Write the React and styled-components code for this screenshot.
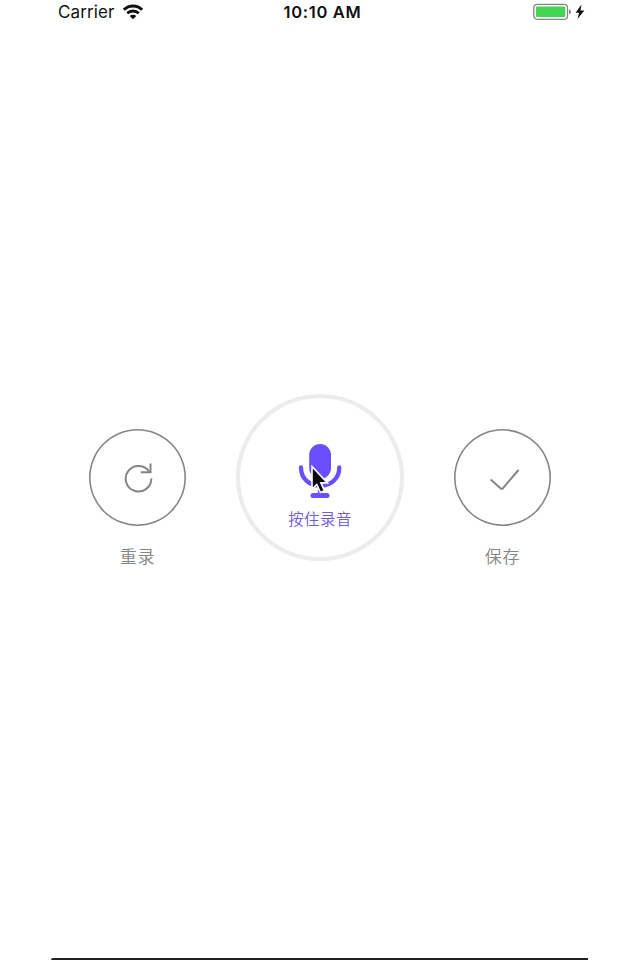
import React from "react";
import styled, { createGlobalStyle } from "styled-components";

const GlobalStyle = createGlobalStyle`
  * {
    box-sizing: border-box;
  }
  body {
    margin: 0;
    background: #fff;
    overflow: hidden;
  }
`;
const Screen = styled.div`
  width: 537px;
  height: 960px;
  margin-left: 51px;
  display: flex;
  flex-direction: column;
  background: #fff;
  font-family: Inter, "Noto Sans CJK SC", sans-serif;
`;
const StatusBar = styled.header`
  display: grid;
  grid-template-columns: 1fr auto 1fr;
  align-items: center;
  height: 24px;
  padding: 0 3px 0 7px;
  color: #111;
  font-size: 17px;
  line-height: 24px;
`;
const StatusGroup = styled.div`
  display: flex;
  align-items: center;
  justify-content: ${({ $end }) => ($end ? "flex-end" : "flex-start")};
  gap: ${({ $end }) => ($end ? "3px" : "8px")};
`;
const Carrier = styled.span`
  letter-spacing: 0.1px;
`;
const Clock = styled.span`
  padding-left: 2px;
  font-size: 16.5px;
  font-weight: 600;
  letter-spacing: 0.7px;
`;
const Recorder = styled.main`
  flex: 1;
  display: flex;
  align-items: flex-start;
  justify-content: space-between;
  padding: 370px 37px 0 38px;
`;
const SideAction = styled.div`
  display: flex;
  flex-direction: column;
  align-items: center;
  margin-top: 35px;
`;
const RoundButton = styled.button`
  display: flex;
  align-items: center;
  justify-content: center;
  width: 97px;
  height: 97px;
  padding: 0;
  border: 0;
  border-radius: 50%;
  background: transparent;
  box-shadow: inset 0 0 0 1.6px #858585;
`;
const SideLabel = styled.span`
  margin-top: 18px;
  color: #858585;
  font-size: 17px;
  font-weight: 350;
  letter-spacing: 0.8px;
  line-height: 26px;
`;
const RecordButton = styled.button`
  position: relative;
  display: flex;
  flex-direction: column;
  align-items: center;
  width: 168px;
  height: 167px;
  padding: 45px 0 0;
  border: 4px solid #ececec;
  border-radius: 50%;
  background: transparent;
  font-family: inherit;
`;
const RecordLabel = styled.span`
  margin-top: 9px;
  color: #6f5ce0;
  font-size: 15.5px;
  font-weight: 350;
  letter-spacing: 0.4px;
  line-height: 24px;
`;
const Pointer = styled.svg`
  position: absolute;
  left: 70px;
  top: 67px;
`;
const BottomEdge = styled.footer`
  height: 2px;
  background: #222;
  border-top-left-radius: 2px;
`;

function WifiIcon() {
  return (
    <svg width="22" height="16" viewBox="0 0 22 16" fill="none" stroke="#111" strokeWidth="2.8">
      <path d="M1.8 5.8C7 0.7 15 0.7 20.2 5.8" />
      <path d="M5.2 9.3C8.5 6.2 13.5 6.2 16.8 9.3" />
      <path d="M11 15.3L7.7 12C9.6 10.2 12.4 10.2 14.3 12Z" fill="#111" stroke="none" />
    </svg>
  );
}

function BatteryIcon() {
  return (
    <svg width="39" height="18" viewBox="0 0 39 18">
      <rect x="0.8" y="1.3" width="33.7" height="15" rx="3.2" fill="#fff" stroke="#858585" strokeWidth="1.3" />
      <rect x="3" y="3.5" width="29.3" height="10.6" rx="1" fill="#45d453" />
      <path d="M36 6.3C38.7 7.2 38.7 10.4 36 11.3Z" fill="#858585" />
    </svg>
  );
}

function BoltIcon() {
  return (
    <svg width="10" height="16" viewBox="0 0 10 16">
      <path d="M6.5 0.5L0.6 8.7H4.1L2.4 15L9.4 6.5H5.5Z" fill="#111" />
    </svg>
  );
}

function RetryIcon() {
  return (
    <svg width="32" height="32" viewBox="0 0 32 32" fill="none" stroke="#858585" strokeWidth="2">
      <path d="M29.3 16.6A12.8 12.8 0 1 1 27.4 10" />
      <path d="M28.5 1.6V10.2H18.8" />
    </svg>
  );
}

function CheckIcon() {
  return (
    <svg width="32" height="24" viewBox="0 0 32 24" fill="none" stroke="#858585" strokeWidth="2" strokeLinecap="round" strokeLinejoin="round">
      <path d="M4.2 14.1L13.5 22.2Q14.8 23.4 16 22.2L31 4.5" />
    </svg>
  );
}

function MicIcon() {
  return (
    <svg width="44" height="56" viewBox="0 0 44 56" fill="none" stroke="#6b4eff" strokeWidth="4.3" strokeLinecap="round">
      <rect x="11.2" y="1" width="21.8" height="35" rx="10.9" fill="#6b4eff" stroke="none" />
      <path d="M3 24.5C3 36 11.5 42.8 22 42.8S41.3 36 41.3 24.5" />
      <path d="M22 43V52" />
      <path d="M15 52.6H29" strokeWidth="5" />
    </svg>
  );
}

function App() {
  return (
    <>
      <GlobalStyle />
      <Screen>
        <StatusBar>
          <StatusGroup>
            <Carrier>Carrier</Carrier>
            <WifiIcon />
          </StatusGroup>
          <Clock>10:10 AM</Clock>
          <StatusGroup $end>
            <BatteryIcon />
            <BoltIcon />
          </StatusGroup>
        </StatusBar>
        <Recorder>
          <SideAction>
            <RoundButton>
              <RetryIcon />
            </RoundButton>
            <SideLabel>重录</SideLabel>
          </SideAction>
          <RecordButton>
            <MicIcon />
            <RecordLabel>按住录音</RecordLabel>
            <Pointer width="19" height="29" viewBox="0 0 19 29">
              <path
                d="M2 1.5V24L6.8 19.5L10.4 27.5L14.4 25.7L10.9 17.9H17.4Z"
                fill="#0b0710"
                stroke="#fff"
                strokeWidth="1.6"
              />
            </Pointer>
          </RecordButton>
          <SideAction>
            <RoundButton>
              <CheckIcon />
            </RoundButton>
            <SideLabel>保存</SideLabel>
          </SideAction>
        </Recorder>
        <BottomEdge />
      </Screen>
    </>
  );
}

export default App;
